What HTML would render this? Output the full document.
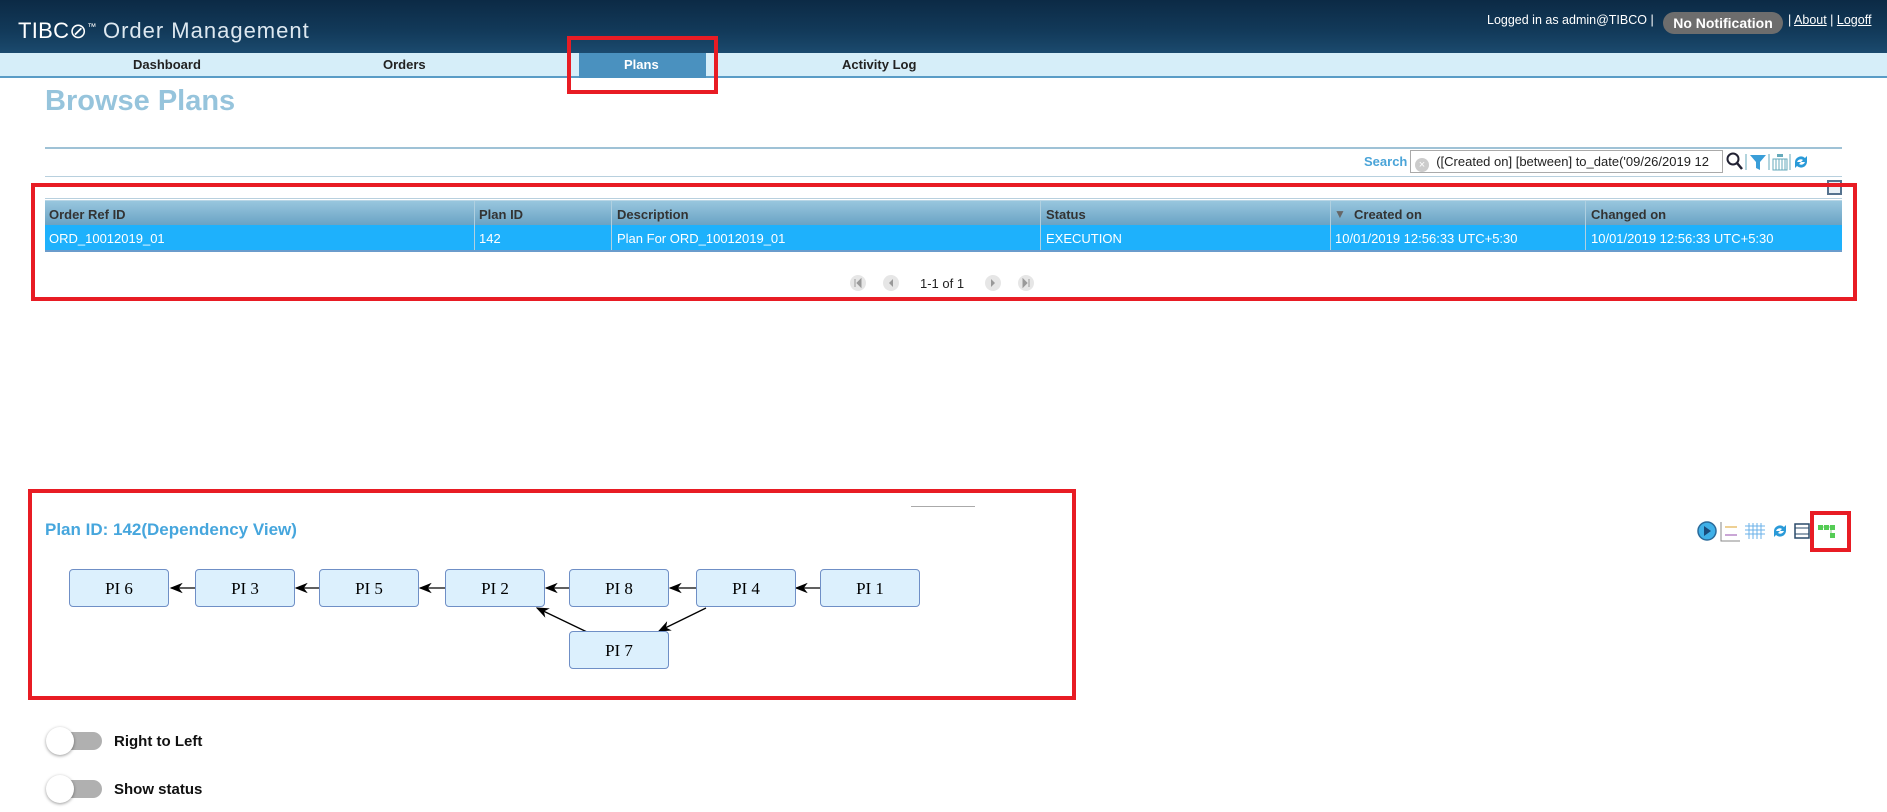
<!DOCTYPE html>
<html><head><meta charset="utf-8"><style>
*{margin:0;padding:0;box-sizing:border-box}
body{width:1887px;height:812px;background:#fff;font-family:"Liberation Sans",Arial,sans-serif;position:relative;overflow:hidden}
.abs{position:absolute}
.hdr{left:0;top:0;width:1887px;height:53px;background:linear-gradient(#0c2a45,#123a5a 60%,#1b4a6e)}
.nav{left:0;top:53px;width:1887px;height:25px;background:#d6eef9;border-bottom:2px solid #5a9cc6}
.nav span{position:absolute;top:4px;font-size:13px;font-weight:bold;color:#222}
.red{border:4px solid #e81c24}
.th{left:45px;top:200px;width:1797px;height:25px;background:linear-gradient(#98c6de,#6aa3c4);border-top:1px solid #b8d6e6}
.tr{left:45px;top:225px;width:1797px;height:27px;background:#1eb1fc;border-bottom:2px solid #6a9ccc}
.c{position:absolute;font-size:13px;top:6px}
.th .c{font-weight:bold;color:#333}
.tr .c{color:#fff}
.sep{position:absolute;top:0;width:1px;height:100%;background:#b0d0e0}
.node{position:absolute;width:100px;height:38px;background:#dcf0fd;border:1px solid #6f8fc6;border-radius:4px;font-family:"Liberation Serif",serif;font-size:17px;text-align:center;line-height:37px;color:#000}
.tog{position:absolute;left:46px;width:56px;height:34px}
.tog .tr2{position:absolute;left:14px;top:8px;width:42px;height:18px;border-radius:9px;background:#b0b0b0}
.tog .kn{position:absolute;left:0;top:3px;width:28px;height:28px;border-radius:50%;background:#fff;box-shadow:0 1px 3px rgba(0,0,0,.4)}
.tl{position:absolute;left:114px;font-size:15px;font-weight:bold;color:#111}
</style></head><body>
<div class="abs hdr"></div>
<div class="abs" style="left:18px;top:18px;color:#fff;font-size:22px;letter-spacing:0.3px">TIBC<span style="font-size:21px">⊘</span><sup style="font-size:9px">™</sup> <span style="color:#dde8f0;letter-spacing:1px">Order Management</span></div>
<div class="abs" style="left:1487px;top:13px;color:#fff;font-size:12.5px">Logged in as admin@TIBCO |</div>
<div class="abs" style="left:1663px;top:12px;width:120px;height:22px;background:#6d6d6d;border-radius:11px;color:#fff;font-weight:bold;font-size:14px;text-align:center;line-height:22px">No Notification</div>
<div class="abs" style="left:1788px;top:13px;color:#fff;font-size:12.5px">| <u>About</u> | <u>Logoff</u></div>
<div class="abs nav">
<span style="left:133px">Dashboard</span>
<span style="left:383px">Orders</span>
<div style="position:absolute;left:579px;top:0;width:127px;height:25px;background:#4a91bf"></div>
<span style="left:624px;color:#fff">Plans</span>
<span style="left:842px">Activity Log</span>
</div>
<div class="abs red" style="left:567px;top:36px;width:151px;height:58px"></div>
<div class="abs" style="left:45px;top:85px;font-size:29px;font-weight:bold;color:#96c4dc">Browse Plans</div>
<div class="abs" style="left:45px;top:147px;width:1797px;height:2px;background:#9fc2d6"></div>
<div class="abs" style="left:1364px;top:154px;font-size:13px;font-weight:bold;color:#4aa4d8">Search</div>
<div class="abs" style="left:1410px;top:150px;width:313px;height:23px;border:1px solid #aaa;font-size:13px;line-height:21px;white-space:nowrap;overflow:hidden;color:#222;padding-left:4px"><span style="display:inline-block;width:14px;height:14px;border-radius:50%;background:#ccc;color:#fff;font-size:11px;line-height:14px;text-align:center;vertical-align:-2px">×</span>&nbsp; ([Created on] [between] to_date('09/26/2019 12</div>
<svg class="abs" style="left:1725px;top:150px" width="130" height="24">
<circle cx="8" cy="9" r="5.5" fill="none" stroke="#223" stroke-width="2"/><line x1="12" y1="13" x2="17" y2="19" stroke="#223" stroke-width="2.5"/>
<line x1="21" y1="4" x2="21" y2="20" stroke="#6ab" />
<path d="M25 5h16l-6 7v8l-4-2v-6z" fill="#3a9ed8"/>
<line x1="44" y1="4" x2="44" y2="20" stroke="#6ab"/>
<rect x="48" y="9" width="14" height="11" fill="none" stroke="#6ab" stroke-width="1"/><path d="M51 9v11M54 9v11M57 9v11M60 9v11" stroke="#6ab"/><rect x="52" y="4" width="6" height="3" fill="#6ab"/>
<line x1="65" y1="4" x2="65" y2="20" stroke="#6ab"/>
<path d="M70 12a6 6 0 0 1 10-4l2-2v6h-6l2-2a4 4 0 0 0-6 2z M82 12a6 6 0 0 1-10 4l-2 2v-6h6l-2 2a4 4 0 0 0 6-2z" fill="#2a9ad8"/>
</svg>
<div class="abs" style="left:45px;top:176px;width:1797px;height:1px;background:#b8d0de"></div>
<div class="abs" style="left:1827px;top:180px;width:15px;height:15px;border:2px solid #55728e;background:#e8f0f6"></div>
<div class="abs" style="left:45px;top:198px;width:1797px;height:1px;background:#b8d0de"></div>
<div class="abs th">
<span class="c" style="left:4px">Order Ref ID</span><div class="sep" style="left:429px"></div>
<span class="c" style="left:434px">Plan ID</span><div class="sep" style="left:566px"></div>
<span class="c" style="left:572px">Description</span><div class="sep" style="left:995px"></div>
<span class="c" style="left:1001px">Status</span><div class="sep" style="left:1285px"></div>
<span class="c" style="left:1289px;color:#666;font-size:12px;top:6px">▼</span><span class="c" style="left:1309px">Created on</span><div class="sep" style="left:1540px"></div>
<span class="c" style="left:1546px">Changed on</span>
</div>
<div class="abs tr">
<span class="c" style="left:4px">ORD_10012019_01</span><div class="sep" style="left:429px"></div>
<span class="c" style="left:434px">142</span><div class="sep" style="left:566px"></div>
<span class="c" style="left:572px">Plan For ORD_10012019_01</span><div class="sep" style="left:995px"></div>
<span class="c" style="left:1001px">EXECUTION</span><div class="sep" style="left:1285px"></div>
<span class="c" style="left:1290px">10/01/2019 12:56:33 UTC+5:30</span><div class="sep" style="left:1540px"></div>
<span class="c" style="left:1546px">10/01/2019 12:56:33 UTC+5:30</span>
</div>
<svg class="abs" style="left:845px;top:273px" width="200" height="20">
<circle cx="13" cy="10" r="8" fill="#e6e6e6"/><path d="M10 6v8M16 6l-4 4 4 4z" stroke="#999" fill="#999"/>
<circle cx="46" cy="10" r="8" fill="#e6e6e6"/><path d="M48 6l-4 4 4 4z" fill="#999"/>
<circle cx="148" cy="10" r="8" fill="#e6e6e6"/><path d="M146 6l4 4-4 4z" fill="#999"/>
<circle cx="181" cy="10" r="8" fill="#e6e6e6"/><path d="M178 6l4 4-4 4z M184 6v8" stroke="#999" fill="#999"/>
</svg>
<div class="abs" style="left:920px;top:276px;font-size:13px;color:#222">1-1 of 1</div>
<div class="abs red" style="left:31px;top:183px;width:1826px;height:118px"></div>

<div class="abs red" style="left:28px;top:489px;width:1048px;height:211px"></div>
<div class="abs" style="left:911px;top:506px;width:64px;height:1px;background:#aaa"></div>
<div class="abs" style="left:45px;top:520px;font-size:17px;font-weight:bold;color:#46a6dd">Plan ID: 142(Dependency View)</div>
<svg class="abs" style="left:0;top:0" width="1100" height="700">
<defs><marker id="a" markerWidth="10" markerHeight="10" refX="9" refY="5" orient="auto"><path d="M0 1L10 5L0 9L3 5z" fill="#000"/></marker></defs>
<g stroke="#000" stroke-width="1.3" marker-end="url(#a)">
<line x1="195" y1="588" x2="171" y2="588"/>
<line x1="319" y1="588" x2="296" y2="588"/>
<line x1="445" y1="588" x2="420" y2="588"/>
<line x1="569" y1="588" x2="546" y2="588"/>
<line x1="696" y1="588" x2="670" y2="588"/>
<line x1="820" y1="588" x2="796" y2="588"/>
<line x1="587" y1="632" x2="537" y2="608"/>
<line x1="706" y1="608" x2="659" y2="631"/>
</g></svg>
<div class="node" style="left:69px;top:569px">PI 6</div>
<div class="node" style="left:195px;top:569px">PI 3</div>
<div class="node" style="left:319px;top:569px">PI 5</div>
<div class="node" style="left:445px;top:569px">PI 2</div>
<div class="node" style="left:569px;top:569px">PI 8</div>
<div class="node" style="left:696px;top:569px">PI 4</div>
<div class="node" style="left:820px;top:569px">PI 1</div>
<div class="node" style="left:569px;top:631px">PI 7</div>

<svg class="abs" style="left:1695px;top:518px" width="150" height="28">
<circle cx="12" cy="13" r="9" fill="#3fb0e8" stroke="#2a6a9a" stroke-width="1.5"/><path d="M9 8l7 5-7 5z" fill="#1a4a7a"/>
<path d="M26 4v19h19" stroke="#888" fill="none"/><path d="M30 9h12" stroke="#e8c070" stroke-width="1.5"/><path d="M30 17h12" stroke="#b888c8" stroke-width="1.5"/>
<path d="M54 5v16M58 5v16M62 5v16M66 5v16M50 8h20M50 12h20M50 16h20" stroke="#6ab0e8"/>
<path d="M79 13a6 6 0 0 1 10-4l2-2v6h-6l2-2a4 4 0 0 0-6 2z M91 13a6 6 0 0 1-10 4l-2 2v-6h6l-2 2a4 4 0 0 0 6-2z" fill="#2a9ad8"/>
<rect x="100" y="6" width="14" height="14" fill="#fff" stroke="#2a4a6a" stroke-width="1.5"/><path d="M100 10h14M100 16h14" stroke="#2a4a6a"/>
<path d="M126 9h12M136 11v7" stroke="#8c8" stroke-width="1"/>
<rect x="123" y="7" width="5" height="5" fill="#5c5"/><rect x="129" y="7" width="5" height="5" fill="#5c5"/><rect x="135" y="7" width="5" height="5" fill="#5c5"/><rect x="135" y="15" width="5" height="5" fill="#5c5"/>
</svg>
<div class="abs red" style="left:1810px;top:511px;width:41px;height:41px"></div>

<div class="tog" style="top:724px"><div class="tr2"></div><div class="kn"></div></div>
<div class="tl" style="top:733px">Right to Left</div>
<div class="tog" style="top:772px"><div class="tr2"></div><div class="kn"></div></div>
<div class="tl" style="top:781px">Show status</div>
</body></html>
